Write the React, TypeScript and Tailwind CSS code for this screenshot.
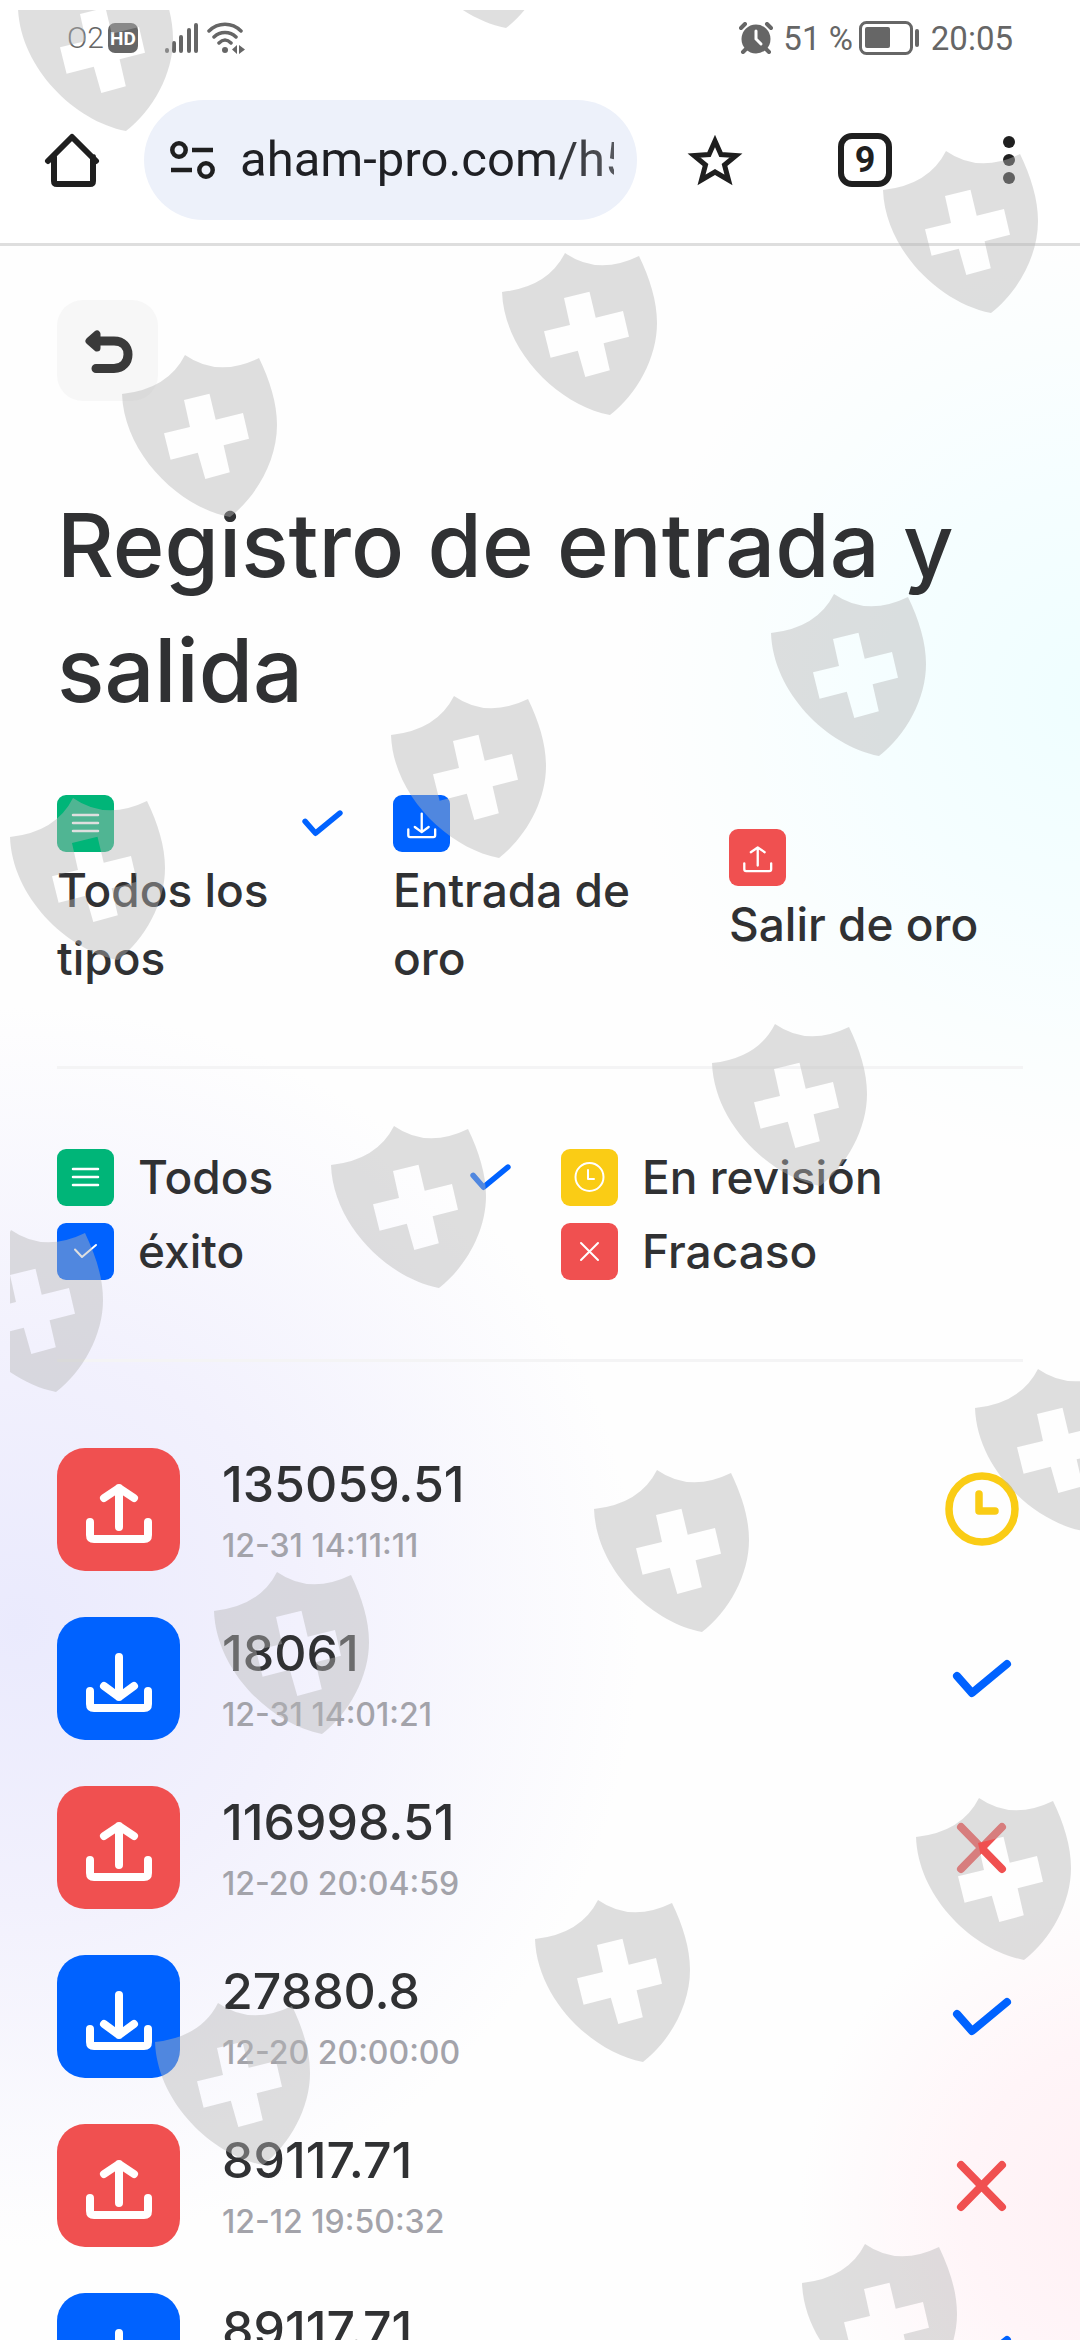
import type { ReactNode } from "react";

type Kind = "in" | "out";
type Status = "review" | "success" | "failed";

const RECORDS: { amount: string; date?: string; kind: Kind; status: Status }[] = [
  { amount: "135059.51", date: "12-31 14:11:11", kind: "out", status: "review" },
  { amount: "18061", date: "12-31 14:01:21", kind: "in", status: "success" },
  { amount: "116998.51", date: "12-20 20:04:59", kind: "out", status: "failed" },
  { amount: "27880.8", date: "12-20 20:00:00", kind: "in", status: "success" },
  { amount: "89117.71", date: "12-12 19:50:32", kind: "out", status: "failed" },
  { amount: "89117.71", kind: "in", status: "success" },
];

// top-left corner of every watermark shield, in overlay units
const SHIELDS: [number, number][] = [
  [8, -41],
  [388, -144],
  [873, 141],
  [492, 243],
  [112, 345],
  [761, 584],
  [381, 686],
  [0, 788],
  [702, 1014],
  [321, 1116],
  [-62, 1220],
  [965, 1359],
  [584, 1460],
  [204, 1562],
  [906, 1788],
  [525, 1890],
  [145, 1993],
  [792, 2234],
];

function Tray({ kind, className, strokeWidth }: { kind: Kind; className: string; strokeWidth: number }) {
  return (
    <svg
      viewBox="0 0 123 123"
      className={className}
      fill="none"
      stroke="#fff"
      strokeWidth={strokeWidth}
      strokeLinecap="round"
      strokeLinejoin="round"
      aria-hidden="true"
    >
      <path d="M33 74V87Q33 91 37 91H87Q91 91 91 87V74" />
      {kind === "out" ? <path d="M62 79V40M47 50L62 40L77 50" /> : <path d="M62 40V80M47 69L62 80L77 69" />}
    </svg>
  );
}

function Check({ className }: { className: string }) {
  return (
    <svg
      viewBox="0 0 82 82"
      className={className}
      fill="none"
      stroke="#0062ff"
      strokeWidth="8"
      strokeLinecap="round"
      strokeLinejoin="round"
      aria-hidden="true"
    >
      <path d="M16 38L31 55L66 26" />
    </svg>
  );
}

function StatusIcon({ status }: { status: Status }) {
  if (status === "success") return <Check className="size-[82px] shrink-0" />;
  if (status === "failed") {
    return (
      <svg viewBox="0 0 82 82" className="size-[82px] shrink-0" stroke="#f05050" strokeWidth="8" strokeLinecap="round" aria-hidden="true">
        <path d="M20 20L61 62M61 20L20 62" />
      </svg>
    );
  }
  return (
    <svg
      viewBox="0 0 82 82"
      className="size-[82px] shrink-0"
      fill="none"
      stroke="#facc15"
      strokeWidth="7.500"
      strokeLinecap="round"
      strokeLinejoin="round"
      aria-hidden="true"
    >
      <circle cx="41" cy="40" r="33" />
      <path d="M38 25V42H54" />
    </svg>
  );
}

function Tile({ color, children }: { color: string; children: ReactNode }) {
  return <span className={`block size-[57px] shrink-0 overflow-hidden rounded-[9px] ${color}`}>{children}</span>;
}

function Glyph({ children }: { children: ReactNode }) {
  return (
    <svg
      viewBox="0 0 57 57"
      className="size-full"
      fill="none"
      stroke="#fff"
      strokeWidth="2"
      strokeLinecap="round"
      strokeLinejoin="round"
      aria-hidden="true"
    >
      {children}
    </svg>
  );
}

const MenuTile = () => (
  <Tile color="bg-[#00b578]">
    <Glyph>
      <path d="M16 20H41M16 28H41M16 36H41" strokeWidth="2.500" />
    </Glyph>
  </Tile>
);

function StatusBar() {
  return (
    <div className="flex h-[76px] items-center px-[67px] text-[33px] leading-none text-[#666]">
      <span className="text-[30px] font-light">O2</span>
      <span className="ml-1 flex size-[30px] items-center justify-center rounded-[7px] bg-[#666] text-[19px] font-bold text-white">
        HD
      </span>
      <svg viewBox="0 0 34 32" className="ml-[27px] h-8 w-[34px]" stroke="#666" strokeWidth="4" strokeLinecap="round" aria-hidden="true">
        <path d="M2 29V28M9 29V21M16 29V15M24 29V8M31 29V3" />
      </svg>
      <svg viewBox="0 0 40 32" className="ml-2 h-8 w-10" fill="none" stroke="#666" strokeWidth="3.500" strokeLinecap="round" aria-hidden="true">
        <path d="M2 9C11 0 25 0 34 9M7 15C13 9 23 9 29 15M12 21C16 17 20 17 24 21" />
        <circle cx="18" cy="28" r="3" fill="#666" stroke="none" />
        <path d="M30 23V32L25 27.500ZM32 23V32L38 27.500Z" fill="#666" stroke="none" />
      </svg>
      <svg viewBox="0 0 34 32" className="ml-auto h-8 w-[34px]" aria-hidden="true">
        <circle cx="17" cy="17" r="14.500" fill="#666" />
        <path d="M2 6L6 2M32 6L28 2M7 27L4 30M27 27L30 30" stroke="#666" strokeWidth="4" strokeLinecap="round" />
        <path d="M17 9V17L22 22" stroke="#fff" strokeWidth="3" strokeLinecap="round" fill="none" />
      </svg>
      <span className="ml-2.5">51 %</span>
      <svg viewBox="0 0 62 34" className="ml-1.5 h-[34px] w-[62px]" aria-hidden="true">
        <rect x="1.500" y="1.500" width="51" height="31" rx="6" fill="none" stroke="#666" strokeWidth="3" />
        <rect x="6" y="6" width="25" height="21" rx="2" fill="#666" />
        <rect x="56" y="8" width="4" height="18" rx="2" fill="#666" />
      </svg>
      <span className="ml-2.5">20:05</span>
    </div>
  );
}

function BrowserBar() {
  return (
    <div className="flex h-[170px] items-center border-b-[3px] border-[#dedede] pr-[57px] pl-11 text-[#1f1f1f]">
      <button aria-label="Inicio" className="shrink-0">
        <svg viewBox="0 0 56 56" className="size-14" fill="none" stroke="#1f1f1f" strokeWidth="6" strokeLinejoin="round" strokeLinecap="round" aria-hidden="true">
          <path d="M4 29L28 5L52 29M10 25V49Q10 52 13 52H46Q49 52 49 49V25" />
        </svg>
      </button>
      <div className="ml-11 flex h-[120px] min-w-0 flex-1 items-center rounded-full bg-[#edf1fa] pr-[23px] pl-[26px]">
        <svg viewBox="0 0 46 40" className="h-10 w-[46px] shrink-0" fill="none" stroke="#1f1f1f" strokeWidth="4.500" aria-hidden="true">
          <circle cx="9" cy="10" r="6.700" />
          <circle cx="36" cy="30" r="6.700" />
          <path d="M22 10H43M1 30H22" />
        </svg>
        <input
          aria-label="Dirección"
          readOnly
          defaultValue="aham-pro.com/h5"
          className="ml-6 w-full min-w-0 bg-transparent font-[Roboto,sans-serif] text-[49px] text-[#1f2024] outline-none [mask-image:linear-gradient(to_right,#000_80%,#000b)]"
        />
      </div>
      <button aria-label="Marcador" className="ml-[50px] shrink-0">
        <svg viewBox="0 0 56 56" className="size-14" fill="none" stroke="#1f1f1f" strokeWidth="5" aria-hidden="true">
          <path d="M28 9L34 22.500L49 23.500L37.500 33L41.500 48L28 40L14.500 48L18.500 33L7 23.500L22 22.500Z" />
        </svg>
      </button>
      <button
        aria-label="Pestañas"
        className="ml-[95px] flex size-[54px] shrink-0 items-center justify-center rounded-[14px] border-[6px] border-[#1f1f1f] text-[36px] leading-none font-bold"
      >
        9
      </button>
      <button aria-label="Más opciones" className="ml-[103px] shrink-0">
        <svg viewBox="0 0 28 56" className="h-14 w-7" fill="#1f1f1f" aria-hidden="true">
          <circle cx="14" cy="10" r="6" />
          <circle cx="14" cy="28" r="6" />
          <circle cx="14" cy="46" r="6" />
        </svg>
      </button>
    </div>
  );
}

function TypeFilters() {
  return (
    <div className="mt-[62px] grid grid-cols-3 items-center gap-x-[42px] text-[46px] leading-[68px]">
      <button aria-pressed="true" className="text-left">
        <span className="flex items-center justify-between">
          <MenuTile />
          <Check className="size-[57px]" />
        </span>
        <span className="mt-1 block pr-16">Todos los tipos</span>
      </button>
      <button aria-pressed="false" className="text-left">
        <Tile color="bg-[#0062ff]">
          <Tray kind="in" className="size-full" strokeWidth={5} />
        </Tile>
        <span className="mt-1 block">Entrada de oro</span>
      </button>
      <button aria-pressed="false" className="text-left">
        <Tile color="bg-[#f05050]">
          <Tray kind="out" className="size-full" strokeWidth={5} />
        </Tile>
        <span className="mt-1 block whitespace-nowrap">Salir de oro</span>
      </button>
    </div>
  );
}

function StatusFilters() {
  return (
    <div className="grid grid-cols-2 gap-x-[42px] gap-y-[6px] text-[46px] leading-[68px]">
      <button aria-pressed="true" className="flex items-center gap-6 text-left">
        <MenuTile />
        <span>Todos</span>
        <Check className="ml-auto size-[57px]" />
      </button>
      <button aria-pressed="false" className="flex items-center gap-6 text-left">
        <Tile color="bg-[#facc15]">
          <Glyph>
            <circle cx="28.500" cy="28" r="14" />
            <path d="M27 21V30H33" />
          </Glyph>
        </Tile>
        <span>En revisión</span>
      </button>
      <button aria-pressed="false" className="flex items-center gap-6 text-left">
        <Tile color="bg-[#0062ff]">
          <Glyph>
            <path d="M18 26.500L25 34L39 22" />
          </Glyph>
        </Tile>
        <span>éxito</span>
      </button>
      <button aria-pressed="false" className="flex items-center gap-6 text-left">
        <Tile color="bg-[#f05050]">
          <Glyph>
            <path d="M20 20L37 37M37 20L20 37" />
          </Glyph>
        </Tile>
        <span>Fracaso</span>
      </button>
    </div>
  );
}

function Watermark() {
  return (
    <svg className="pointer-events-none absolute top-[10px] left-[10px] h-full w-full" fill="#b6b6b6" fillOpacity="0.44" aria-hidden="true">
      {SHIELDS.map(([x, y]) => (
        <path
          key={`${x},${y}`}
          transform={`translate(${x} ${y})`}
          fillRule="evenodd"
          d="M0 39Q46 34 63 0Q96 23 137 3C148 26 155 48 155 70C155 105 135 141 108 162C56 152 2 98 0 39ZM62 45L68 72L42 78.300L48.600 104.700L75.800 97.700L83.300 124L107.800 117.300L101.600 90.300L127 83.700L121 58L93.700 64.700L87.500 38.700Z"
        />
      ))}
    </svg>
  );
}

export default function App() {
  return (
    <div className="relative flex h-screen flex-col overflow-hidden bg-white font-[Roboto,sans-serif]">
      <header className="bg-white">
        <StatusBar />
        <BrowserBar />
      </header>

      <main className="min-h-0 flex-1 overflow-hidden bg-[#fefefe] bg-[radial-gradient(circle_460px_at_1090px_450px,#effeff,#f5feff_45%,#f5feff00),radial-gradient(circle_620px_at_20px_1380px,#eaeafd,#f2f1fd_45%,#f6f5ff00),radial-gradient(circle_330px_at_1130px_1960px,#fff0f4,#fff5f8_50%,#fff5f800)] px-[57px] pt-[54px] font-[Inter,sans-serif] font-medium text-[#303133]">
        <button aria-label="Volver" className="block size-[101px] rounded-[26px] bg-[#f7f7f7]">
          <svg viewBox="0 0 101 101" className="size-full" fill="none" stroke="#3a3a3a" strokeWidth="9" strokeLinecap="round" strokeLinejoin="round" aria-hidden="true">
            <path d="M42 41H57C66 41 71 47 71 54.500C71 62 66 68.500 57 68.500H39" />
            <path d="M32 41L40 34V48Z" fill="#3a3a3a" strokeWidth="7" />
          </svg>
        </button>

        <h1 className="mt-[82px] text-[88px] leading-[125px]">Registro de entrada y salida</h1>

        <TypeFilters />
        <hr className="my-[74px] border-t-[3px] border-[#f4f4f5]" />
        <StatusFilters />
        <hr className="mt-[74px] border-t-[3px] border-[#f4f4f5]" />

        <ul className="mt-[86px] flex flex-col gap-[46px]">
          {RECORDS.map((record, i) => (
            <li key={i} className="flex items-center">
              <span className={`size-[123px] shrink-0 rounded-[28px] ${record.kind === "out" ? "bg-[#f05050]" : "bg-[#0062ff]"}`}>
                <Tray kind={record.kind} className="size-full" strokeWidth={8} />
              </span>
              <div className="ml-[42px] min-w-0 flex-1">
                <p className="text-[50px] leading-[72px]">{record.amount}</p>
                <p className="h-[51px] text-[32px] leading-[51px] text-[#a3a3aa]">{record.date}</p>
              </div>
              <StatusIcon status={record.status} />
            </li>
          ))}
        </ul>
      </main>

      <Watermark />
    </div>
  );
}
